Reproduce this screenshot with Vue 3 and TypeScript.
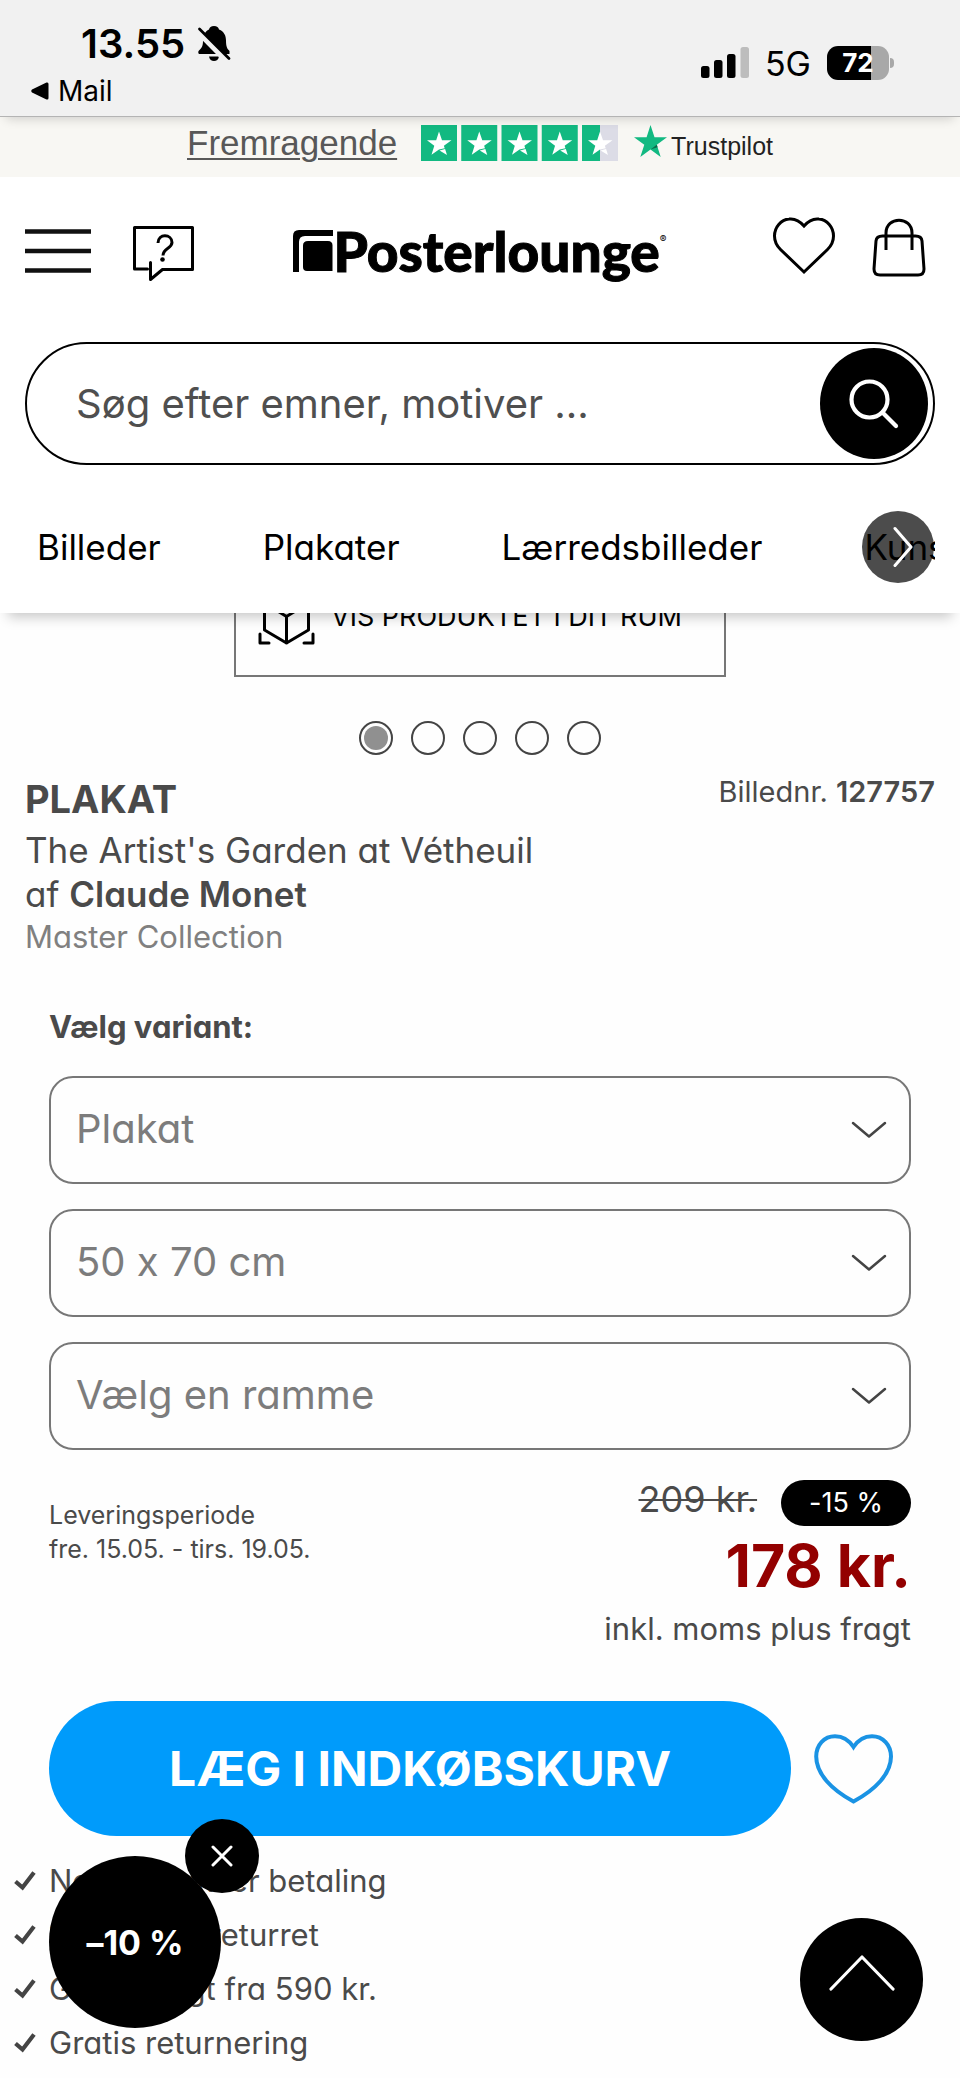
<script setup lang="ts">
import { ref } from 'vue'

interface Choice {
  id: string
  label: string
  options: string[]
}

const categories: string[] = ['Billeder', 'Plakater', 'Lærredsbilleder', 'Kunsttryk']
const choices: Choice[] = [
  { id: 'variant', label: 'Variant', options: ['Plakat', 'Lærred'] },
  { id: 'size', label: 'Størrelse', options: ['50 x 70 cm', '60 x 80 cm'] },
  { id: 'frame', label: 'Ramme', options: ['Vælg en ramme', 'Sort ramme'] },
]
const selected = ref<string[]>(choices.map((c) => c.options[0]))
const benefits: string[] = [
  'Nem og sikker betaling',
  '100 dages returret',
  'Gratis fragt fra 590 kr.',
  'Gratis returnering',
]
const slides = [1, 2, 3, 4, 5]
const activeSlide = ref(1)
const query = ref('')
const promoOpen = ref(true)
</script>

<template>
  <div class="page">
    <div class="status">
      <div class="status-left">
        <div class="clock">
          <span>13.55</span>
          <svg width="34" height="36" viewBox="198 27 34 36" aria-hidden="true">
            <path d="M215 27c3 0 4.500 1.500 5 3.500 5 2 7 6 7 11 0 6 1 8 3.500 10.500V55H200c-1-1-1-2.500 0-3.500 3-3 4-4.500 4-10 0-5 2-9 6-11 .5-2 2-3.500 5-3.500z" />
            <path d="M210 57.500h10c-.5 3-2.500 4.500-5 4.500s-4.500-1.500-5-4.500z" />
            <path d="M198 31.500 229 63" stroke="#f1f1f1" stroke-width="6" />
            <path d="M200.500 30 230 59.500" stroke="#000" stroke-width="2.800" stroke-linecap="round" />
          </svg>
        </div>
        <a class="back" href="#">
          <svg width="18" height="18" viewBox="0 0 18 18" aria-hidden="true">
            <path d="M1 7.500 15.500.600q2-.6 2 1.400v14q0 2-2 1.400L1 10.500q-1.500-1.500 0-3z" />
          </svg>
          <span>Mail</span>
        </a>
      </div>
      <div class="status-right">
        <svg width="48" height="32" viewBox="0 0 48 32" aria-hidden="true">
          <rect x="0" y="19" width="8.500" height="12" rx="2.500" />
          <rect x="13" y="13" width="8.500" height="18" rx="2.500" />
          <rect x="26" y="7" width="8.500" height="24" rx="2.500" />
          <rect x="39.500" y="0" width="8.500" height="31" rx="2.500" fill="#bdbdbd" />
        </svg>
        <span class="network">5G</span>
        <span class="battery"><span class="level">72</span><i class="nub"></i></span>
      </div>
    </div>

    <div class="trust">
      <a href="#" class="rating">Fremragende</a>
      <svg class="stars" width="197" height="36" viewBox="0 0 197 36" role="img" aria-label="4,5 stjerner">
        <g v-for="n in 5" :key="n" :transform="`translate(${(n - 1) * 40.25} 0)`">
          <rect width="36" height="36" fill="#12b981" />
          <rect v-if="n === 5" x="18" width="18" height="36" fill="#dcdce6" />
          <path fill="#fff" d="M18 6.500l3 8.700h9.500l-7.600 5.600.8 2.400L18 24.500l-7.500 5.200 2.800-8.900-7.300-5.600h9.200zM18.500 25.500l5.600-1.500 1.900 6z" />
        </g>
      </svg>
      <span class="brand">
        <svg width="33" height="32" viewBox="0 0 33 32" aria-hidden="true">
          <path fill="#12b981" d="M16.500 0l4 12.200H33l-10.200 7.500L26.700 32l-10.200-7.600L6.300 32l4-12.300L0 12.200h12.600z" />
          <path fill="#0a6b4b" d="M23.600 22.300l-.8-2.600-6.300 4.700z" />
        </svg>
        <span>Trustpilot</span>
      </span>
    </div>

    <header class="header">
      <div class="top">
        <div class="group">
          <button type="button" aria-label="Menu">
            <svg width="66" height="60" viewBox="25 217 66 60" fill="none" stroke="#111" stroke-width="4.500">
              <path d="M25 231.500h66M25 251h66M25 270.500h66" />
            </svg>
          </button>
          <button type="button" aria-label="Hjælp">
            <svg width="62" height="66" viewBox="133 217 62 66" fill="none" stroke="#000" stroke-width="3">
              <path d="M150.500 262.500v17l12-10H192.500V227.500H134.500v41.500h13" stroke-linecap="round" stroke-linejoin="round" />
              <path d="M158 243c0-10 14-9 14-.5 0 6-9 5.500-9 13" />
              <circle cx="162.500" cy="259.500" r="2.300" fill="#000" stroke="none" />
            </svg>
          </button>
        </div>
        <a class="logo" href="#" aria-label="Posterlounge">
          <svg width="40" height="42" viewBox="0 0 40 42" aria-hidden="true">
            <path d="M6 0h34v6H12Q6 6 6 12v30H0V6Q0 0 6 0z" />
            <path d="M15 11h20q4.500 0 4.500 4.500V41H14q-4 0-4-4V15.500Q10 11 15 11z" />
          </svg>
          <span class="wordmark">Posterlounge</span>
          <sup>®</sup>
        </a>
        <div class="group end">
          <button type="button" aria-label="Ønskeliste">
            <svg width="62" height="60" viewBox="774 217 62 60" fill="none" stroke="#000" stroke-width="3">
              <path d="M805 226c-5-6-11-7.500-15-7-8 .8-14.500 8-14.500 17 0 6 2.500 10 6 13.500L805 272l23.500-22.500c3.500-3.500 6-7.500 6-13.500 0-9-6.500-16.200-14.500-17-4-.5-10 1-15 7z" />
            </svg>
          </button>
          <button type="button" aria-label="Kurv">
            <svg width="54" height="60" viewBox="872 217 54 60" fill="none" stroke="#000" stroke-width="3">
              <path d="M882.500 236h33q6 0 6.500 5l2 28q0 6-6 6h-38q-6 0-6-6l2-28q.5-5 6.500-5z" />
              <path d="M886 250v-17c0-17 26-17 26 0v17" />
            </svg>
          </button>
        </div>
      </div>

      <form class="search" role="search" @submit.prevent>
        <input v-model="query" type="text" aria-label="Søg" placeholder="Søg efter emner, motiver ..." />
        <button type="submit" aria-label="Søg">
          <svg width="50" height="50" viewBox="0 0 50 50" fill="none" stroke="#fff" stroke-width="4.200">
            <circle cx="20.500" cy="20.500" r="18" />
            <path d="M33.500 33.500 47 47" stroke-linecap="round" />
          </svg>
        </button>
      </form>

      <nav class="nav">
        <div class="links">
          <a v-for="c in categories" :key="c" href="#">{{ c }}</a>
        </div>
        <button type="button" class="next" aria-label="Næste">
          <svg width="20" height="42" viewBox="0 0 20 42" fill="none" stroke="#fff" stroke-width="3" stroke-linecap="round" stroke-linejoin="round">
            <path d="M2 2.500 18 21 2 39.500" />
          </svg>
        </button>
      </nav>
    </header>

    <main>
      <button type="button" class="room">
        <svg width="57" height="58" viewBox="0 0 57 58" fill="none" stroke="#000" stroke-width="3" stroke-linecap="round" stroke-linejoin="round">
          <path d="M2 11V2h9M46 2h9v9M55 47v9h-9M11 56H2v-9" />
          <path d="M28.500 3 50.500 16v27l-22 13-22-13V16zM6.500 16l22 13.500 22-13.500M28.500 29.500V56" />
        </svg>
        <span>VIS PRODUKTET I DIT RUM</span>
      </button>

      <div class="dots">
        <button
          v-for="s in slides"
          :key="s"
          type="button"
          :class="{ active: s === activeSlide }"
          :aria-label="`Billede ${s}`"
          @click="activeSlide = s"
        ></button>
      </div>

      <section class="heading">
        <div class="names">
          <h1>PLAKAT</h1>
          <p class="title">The Artist's Garden at Vétheuil</p>
          <p class="title">af <a href="#">Claude Monet</a></p>
          <p class="collection">Master Collection</p>
        </div>
        <p class="number">Billednr. <b>127757</b></p>
      </section>

      <section class="buy">
        <label class="choose" for="variant">Vælg variant:</label>
        <div class="selects">
          <div v-for="(c, i) in choices" :key="c.id" class="select">
            <select :id="c.id" v-model="selected[i]" :aria-label="c.label">
              <option v-for="o in c.options" :key="o">{{ o }}</option>
            </select>
            <svg width="36" height="18" viewBox="0 0 36 18" fill="none" stroke="#444" stroke-width="2.500" stroke-linecap="round" stroke-linejoin="round" aria-hidden="true">
              <path d="M2 2 18 15.500 34 2" />
            </svg>
          </div>
        </div>

        <div class="info">
          <p class="delivery">Leveringsperiode<br />fre. 15.05. - tirs. 19.05.</p>
          <div class="prices">
            <div class="was"><s>209 kr.</s><span class="pill">-15 %</span></div>
            <p class="price">178 kr.</p>
            <p class="tax">inkl. moms plus fragt</p>
          </div>
        </div>

        <div class="actions">
          <button type="button" class="cart">LÆG I INDKØBSKURV</button>
          <button type="button" class="wish" aria-label="Tilføj til ønskeliste">
            <svg width="80" height="70" viewBox="0 0 80 70" fill="none" stroke="#1a93e4" stroke-width="4">
              <path d="M39.500 13C34 4.500 27 2.200 21 2.200 10 2.200 2.200 11 2.200 22.500 2.200 40 18 56 39.500 67.500 61 56 77 40 77 22.500 77 11 69 2.200 58 2.200c-6 0-13 2.300-18.500 10.800z" />
            </svg>
          </button>
        </div>
      </section>

      <ul class="benefits">
        <li v-for="b in benefits" :key="b">
          <svg width="22" height="20" viewBox="0 0 22 20" fill="none" stroke="#444" stroke-width="4.200" aria-hidden="true">
            <path d="M1.500 10.500 8.500 16.500 20 1.500" />
          </svg>
          <span>{{ b }}</span>
        </li>
      </ul>
    </main>

    <div v-if="promoOpen" class="promo">
      <button type="button" class="discount">–10 %</button>
      <button type="button" class="close" aria-label="Luk" @click="promoOpen = false">
        <svg width="22" height="22" viewBox="0 0 22 22" stroke="#fff" stroke-width="3" stroke-linecap="round">
          <path d="M2 2 20 20M20 2 2 20" />
        </svg>
      </button>
    </div>
    <button type="button" class="to-top" aria-label="Til toppen">
      <svg width="66" height="36" viewBox="0 0 66 36" fill="none" stroke="#fff" stroke-width="3.200" stroke-linecap="round" stroke-linejoin="round">
        <path d="M2 34 33 2 64 34" />
      </svg>
    </button>
  </div>
</template>

<style>
body {
  margin: 0;
  background: #fefefe;
}
</style>

<style scoped>
.page {
  font-family: Inter, "Open Sans", sans-serif;
  font-feature-settings: "cv11", "calt" 0;
  color: #4a4a4a;
  overflow: hidden;
}
.page * {
  box-sizing: border-box;
}
button,
input,
select {
  font: inherit;
  font-feature-settings: inherit;
  color: inherit;
  background: none;
  border: 0;
  padding: 0;
  margin: 0;
}
button {
  cursor: pointer;
}
svg {
  display: block;
  flex: none;
}
a {
  color: inherit;
  text-decoration: none;
}
h1,
p,
ul {
  margin: 0;
  padding: 0;
}

.status {
  position: relative;
  z-index: 3;
  display: flex;
  justify-content: space-between;
  height: 117px;
  padding: 24px 71px 0 31px;
  background: #f1f1f1;
  border-bottom: 1px solid #b4b4b4;
  box-shadow: 0 8px 10px -6px rgba(0, 0, 0, 0.16);
  color: #000;
  font-feature-settings: normal;
}
.clock {
  display: flex;
  align-items: center;
  gap: 12px;
  padding-left: 50px;
  font-size: 40px;
  font-weight: 600;
  line-height: 40px;
}
.back {
  display: flex;
  align-items: center;
  gap: 9px;
  margin-top: 10px;
  font-size: 28px;
  line-height: 34px;
}
.status-right {
  display: flex;
  align-items: center;
  gap: 16px;
  height: 78px;
}
.network {
  font-size: 34px;
}
.battery {
  position: relative;
  width: 62px;
  height: 34px;
  border-radius: 11px;
  background: linear-gradient(90deg, #000 44px, #a8a8a8 44px);
  color: #fff;
  font-size: 26px;
  font-weight: 700;
  line-height: 34px;
  text-align: center;
}
.nub {
  position: absolute;
  right: -5px;
  top: 12px;
  width: 4px;
  height: 10px;
  border-radius: 0 4px 4px 0;
  background: #a8a8a8;
}

.trust {
  display: flex;
  justify-content: center;
  align-items: flex-start;
  height: 60px;
  padding-top: 8px;
  background: #f8f7f3;
  font-family: "Liberation Sans", Arial, sans-serif;
}
.rating {
  margin-right: 24px;
  color: #585858;
  font-size: 35px;
  line-height: 36px;
  text-decoration: underline;
  text-decoration-thickness: 2px;
  text-underline-offset: 3px;
}
.brand {
  display: flex;
  align-items: center;
  gap: 4px;
  margin-left: 16px;
  color: #222;
  font-size: 25px;
  line-height: 42px;
}
.brand svg {
  align-self: flex-start;
}

.header {
  position: relative;
  z-index: 2;
  padding: 40px 25px 30px;
  background: #fff;
  box-shadow: 0 12px 12px -8px rgba(0, 0, 0, 0.22);
  color: #000;
}
.top {
  display: grid;
  grid-template-columns: 1fr auto 1fr;
  align-items: start;
  height: 65px;
}
.group {
  display: flex;
  align-items: flex-start;
  gap: 42px;
}
.end {
  justify-content: flex-end;
  gap: 37px;
  padding-right: 9px;
}
.logo {
  display: flex;
  align-items: flex-start;
  padding-top: 13px;
}
.wordmark {
  font-family: Lato, sans-serif;
  font-size: 55px;
  font-weight: 900;
  line-height: 42px;
  -webkit-text-stroke: 1px #000;
}
.logo sup {
  font-size: 10px;
  line-height: 18px;
}

.search {
  display: flex;
  align-items: center;
  height: 123px;
  margin-top: 60px;
  padding: 4px 5px 4px 49px;
  border: 2px solid #000;
  border-radius: 62px;
}
.search input {
  flex: 1;
  min-width: 0;
  font-size: 40px;
  outline: none;
}
.search input::placeholder {
  color: #4f4f4f;
  opacity: 1;
}
.search button {
  display: grid;
  place-items: center;
  width: 108px;
  height: 111px;
  border-radius: 50%;
  background: #000;
}

.nav {
  position: relative;
  margin-top: 46px;
}
.links {
  display: flex;
  gap: 102px;
  padding-left: 12px;
  overflow: hidden;
  font-size: 35px;
  line-height: 72px;
  white-space: nowrap;
}
.next {
  position: absolute;
  top: 0;
  right: 1px;
  display: grid;
  place-items: center;
  width: 72px;
  height: 72px;
  padding-left: 10px;
  border-radius: 50%;
  background: rgba(0, 0, 0, 0.7);
}

.room {
  display: flex;
  align-items: center;
  gap: 16px;
  width: 492px;
  height: 122px;
  margin: -58px auto 0;
  padding-left: 22px;
  border: 2px solid #777;
  color: #000;
  font-size: 27px;
  white-space: nowrap;
}
.dots {
  display: flex;
  justify-content: center;
  gap: 18px;
  margin-top: 44px;
}
.dots button {
  width: 34px;
  height: 34px;
  border: 2px solid #444;
  border-radius: 50%;
}
.dots .active {
  padding: 3px;
  background: #909090 content-box;
}

.heading {
  display: flex;
  justify-content: space-between;
  margin: 15px 25px 0;
}
h1 {
  margin: 7px 0;
  font-size: 38px;
  font-weight: 700;
  line-height: 44px;
}
.title {
  font-size: 35px;
  line-height: 44px;
}
.title a {
  font-weight: 600;
}
.collection {
  color: #808080;
  font-size: 31px;
  line-height: 42px;
}
.number {
  font-size: 29px;
  line-height: 44px;
}
.number b {
  font-weight: 600;
}

.buy {
  padding: 48px 49px 0;
}
.choose {
  display: block;
  font-size: 31px;
  font-weight: 700;
  line-height: 42px;
}
.selects {
  display: grid;
  gap: 25px;
  margin-top: 28px;
}
.select {
  display: grid;
  align-items: center;
}
.select select {
  grid-area: 1 / 1;
  width: 100%;
  height: 108px;
  padding: 0 80px 4px 25px;
  border: 2px solid #777;
  border-radius: 24px;
  appearance: none;
  color: #7c7c7c;
  font-size: 40px;
}
.select svg {
  grid-area: 1 / 1;
  justify-self: end;
  margin-right: 24px;
  pointer-events: none;
}
.info {
  display: flex;
  justify-content: space-between;
  margin-top: 30px;
}
.delivery {
  padding-top: 18px;
  font-size: 25px;
  line-height: 34px;
}
.prices {
  text-align: right;
}
.was {
  display: flex;
  justify-content: flex-end;
  gap: 24px;
}
.was s {
  font-size: 36px;
  line-height: 38px;
  text-decoration-thickness: 2px;
}
.pill {
  padding: 0 28px;
  border-radius: 23px;
  background: #000;
  color: #fff;
  font-size: 27px;
  line-height: 46px;
}
.price {
  margin: 4px 0 6px;
  color: #930000;
  font-size: 59px;
  font-weight: 700;
  line-height: 72px;
}
.tax {
  font-size: 31px;
  line-height: 42px;
}
.actions {
  display: flex;
  align-items: center;
  gap: 23px;
  margin: 51px 17px 0 0;
}
.cart {
  flex: 1;
  height: 135px;
  border-radius: 68px;
  background: #009bfb;
  color: #fff;
  font-size: 48px;
  font-weight: 700;
}

.benefits {
  margin-top: 18px;
  padding-left: 14px;
  list-style: none;
  font-size: 31px;
  line-height: 54px;
}
.benefits li {
  display: flex;
  align-items: center;
  gap: 13px;
}

.promo {
  position: fixed;
  left: 49px;
  bottom: 50px;
  z-index: 4;
  color: #fff;
}
.discount {
  width: 172px;
  height: 172px;
  border-radius: 50%;
  background: #000;
  font-size: 34px;
  font-weight: 700;
}
.close {
  position: absolute;
  left: 136px;
  top: -37px;
  display: grid;
  place-items: center;
  width: 74px;
  height: 74px;
  border-radius: 50%;
  background: #000;
}
.to-top {
  position: fixed;
  right: 37px;
  bottom: 37px;
  z-index: 4;
  display: grid;
  place-items: center;
  width: 123px;
  height: 123px;
  padding-bottom: 14px;
  border-radius: 50%;
  background: #000;
}
</style>
